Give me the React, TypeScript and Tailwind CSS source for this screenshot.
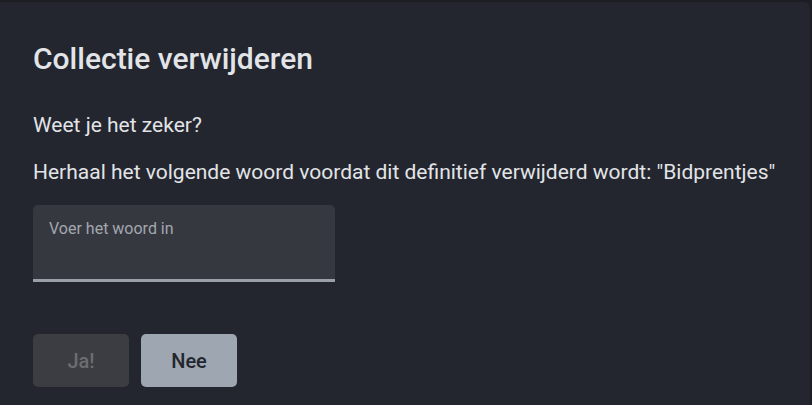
import React from 'react';

export default function App() {
  return (
    <div className="w-[812px] h-[405px] overflow-hidden bg-[#1c1e23] pt-[2px] pr-[2px]" style={{ fontFamily: 'Roboto, "Noto Sans", sans-serif' }}>
      <div className="h-[440px] rounded-tr-[6px] bg-[#23262e] px-[33px] pt-[39px]">
        <h2 className="text-[30px] leading-[36px] font-medium text-[#e2e4e8]">Collectie verwijderen</h2>
        <p className="mt-[34px] text-[21px] leading-[28px] text-[#e2e4e8]">Weet je het zeker?</p>
        <p className="mt-[19px] text-[21px] leading-[28px] text-[#e2e4e8]">
          Herhaal het volgende woord voordat dit definitief verwijderd wordt: "Bidprentjes"
        </p>
        <div className="mt-[19px] w-[302px] h-[77px] rounded-t-[5px] bg-[#363840] border-b-[3px] border-[#9aa0a8] px-[16px] pt-[12px]">
          <span className="text-[16px] leading-[20px] text-[#a3a7ae]">Voer het woord in</span>
        </div>
        <div className="mt-[52px] flex gap-[12px]">
          <button className="w-[96px] h-[53px] rounded-[5px] bg-[#3c3d42] text-[#6c6d72] text-[20px] font-medium">Ja!</button>
          <button className="w-[96px] h-[53px] rounded-[5px] bg-[#9ea6b1] text-[#23262e] text-[20px] font-medium">Nee</button>
        </div>
      </div>
    </div>
  );
}
